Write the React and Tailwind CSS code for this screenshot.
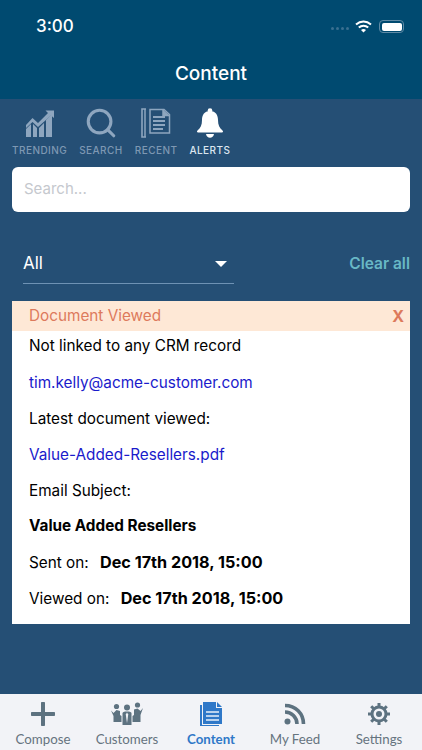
import React from 'react'
import { Search } from 'lucide-react'

const font = { fontFamily: 'Inter' }

function TrendingIcon() {
  return (
    <svg width="30" height="30" viewBox="0 0 30 30" fill="#8ea6bf">
      <path d="M1 29V21L6 16V29Z" />
      <path d="M8 29V16L12 20V29Z" />
      <path d="M14 29V20L19 15V29Z" />
      <path d="M21 29V12L27 6V29Z" />
      <path d="M1 17L7.5 10L13 15L23 5L20.5 2.5H29V10L26 7.5L13 19L7.5 14L1 20Z" />
    </svg>
  )
}

function RecentIcon() {
  return (
    <svg width="30" height="30" viewBox="0 0 30 30" fill="none" stroke="#8ea6bf" strokeWidth="1.5">
      <path d="M5 1H1V29H5" strokeWidth="1.6" />
      <path d="M4 1V29" />
      <path d="M9 1.5H23L28.5 6.5V25H9Z" />
      <path d="M22 1.5V7.5H28.5" fill="#8ea6bf" />
      <path d="M12 9H24M12 13H24M12 17H24M12 21H22" strokeWidth="2" />
    </svg>
  )
}

function BellIcon() {
  return (
    <svg width="28" height="30" viewBox="0 0 28 30" fill="white">
      <circle cx="14" cy="2.5" r="2.3" />
      <path d="M14 3C8 3 6 7.5 6 12C6 17 4.5 20 1.5 22.5C0.5 23.3 1 24.5 2 24.5H26C27 24.5 27.5 23.3 26.5 22.5C23.5 20 22 17 22 12C22 7.5 20 3 14 3Z" />
      <path d="M10 26H18C17.5 28.5 16 29.7 14 29.7S10.5 28.5 10 26Z" />
    </svg>
  )
}

function CustomersIcon() {
  return (
    <svg width="32" height="24" viewBox="0 0 32 24" fill="#5d7280">
      <circle cx="5.5" cy="4.5" r="2.6" />
      <circle cx="16" cy="5.5" r="3" />
      <circle cx="26.5" cy="3" r="2.6" />
      <path d="M0 8.5L2.5 11L5.5 8L9 9V13L10.5 14V20H2.5V14Z" />
      <path d="M11.5 23V11.5C11.5 10 13 9.5 16 9.5S20.5 10 20.5 11.5V23Z" />
      <path d="M32 6L29.5 9L26.5 6.5L23 7.5V13L21.5 14V20H29.5V13Z" />
      <path d="M16 10.5L14.8 12.5L15.5 18L16 21L16.5 18L17.2 12.5Z" fill="#f2f3f7" />
    </svg>
  )
}

function ContentIcon() {
  return (
    <svg width="24" height="24" viewBox="0 0 24 24" fill="#2f78c8">
      <path d="M4 0H17V6H23V22H4Z" />
      <path d="M1 3H3V23H20V24H1Z" />
      <path d="M18 0L23 5H18Z" />
      <path d="M7 9H20V11H7ZM7 13H20V15H7ZM7 17H20V19H7Z" fill="#b9d2ee" />
    </svg>
  )
}

function PlusIcon() {
  return (
    <svg width="24" height="24" viewBox="0 0 24 24" fill="#5d7280">
      <path d="M10 1C10 0.4 10.4 0 11 0H13C13.6 0 14 0.4 14 1V10H23C23.6 10 24 10.4 24 11V13C24 13.6 23.6 14 23 14H14V23C14 23.6 13.6 24 13 24H11C10.4 24 10 23.6 10 23V14H1C0.4 14 0 13.6 0 13V11C0 10.4 0.4 10 1 10H10Z" />
    </svg>
  )
}

function FeedIcon() {
  return (
    <svg width="22" height="22" viewBox="0 0 22 22" fill="none" stroke="#5d7280" strokeWidth="3.6">
      <circle cx="3.5" cy="18.5" r="3" fill="#5d7280" stroke="none" />
      <path d="M1 9C7.5 9 13 14.5 13 21" />
      <path d="M1 2.5C11.5 2.5 19.5 10.5 19.5 21" />
    </svg>
  )
}

function GearIcon() {
  return (
    <svg width="24" height="24" viewBox="0 0 24 24">
      <circle cx="12" cy="12" r="7" fill="none" stroke="#5d7280" strokeWidth="3" />
      <circle cx="12" cy="12" r="3" fill="#5d7280" />
      <path d="M12 1V5M12 19V23M1 12H5M19 12H23M4.2 4.2L7 7M17 17L19.8 19.8M19.8 4.2L17 7M7 17L4.2 19.8" stroke="#5d7280" strokeWidth="3" />
    </svg>
  )
}

function TopTab({ icon, label, active }) {
  return (
    <div className="flex flex-col items-center shrink-0">
      <div className="h-[30px] flex items-center justify-center">{icon}</div>
      <span className={`mt-[5px] text-[10px] leading-[14px] tracking-[0.45px] font-medium ${active ? 'text-[#dce6f0]' : 'text-[#7e98b3]'}`}>{label}</span>
    </div>
  )
}

function BottomTab({ icon, label, active }) {
  return (
    <div className="flex-1 flex flex-col items-center">
      <div className="h-[26px] flex items-center justify-center">{icon}</div>
      <span className={`mt-[3px] text-[13.3px] leading-[18px] ${active ? 'text-[#2f78c8] font-bold' : 'text-[#66747f]'}`} style={{ fontFamily: 'Lato' }}>{label}</span>
    </div>
  )
}

export default function App() {
  return (
    <div className="w-[422px] h-[750px] flex flex-col overflow-hidden bg-[#254f75]" style={font}>
      <header className="bg-[#004a70] h-[99px] shrink-0 text-white">
        <div className="flex items-center justify-between h-[53px] pl-[36px] pr-[18px]">
          <span className="text-[17px] font-medium">3:00</span>
          <div className="flex items-center gap-[6px]">
            <div className="flex gap-[2px] mt-[3px]">
              <span className="w-[3px] h-[3px] rounded-full bg-[#3a7090]"></span>
              <span className="w-[3px] h-[3px] rounded-full bg-[#3a7090]"></span>
              <span className="w-[3px] h-[3px] rounded-full bg-[#3a7090]"></span>
              <span className="w-[3px] h-[3px] rounded-full bg-[#3a7090]"></span>
            </div>
            <svg width="17" height="13" viewBox="0 0 17 13" fill="none" stroke="white" strokeWidth="2">
              <path d="M1 4.5C5.5 0.5 11.5 0.5 16 4.5" />
              <path d="M3.8 7.5C6.5 5 10.5 5 13.2 7.5" />
              <path d="M8.5 12.5L6 10C7.5 8.8 9.5 8.8 11 10Z" fill="white" stroke="none" />
            </svg>
            <div className="w-[25px] h-[13px] rounded-[4px] border border-[#5f8aa5] p-[1.5px] ml-[1px]">
              <div className="w-full h-full bg-white rounded-[2px]"></div>
            </div>
          </div>
        </div>
        <h1 className="text-center text-[19px] leading-[24px] font-medium mt-[9px]">Content</h1>
      </header>

      <main className="flex-1 flex flex-col px-[12px]">
        <div className="flex gap-[12px] mt-[9px]">
          <TopTab icon={<TrendingIcon />} label="TRENDING" />
          <TopTab icon={<Search size={34} strokeWidth={2.2} color="#8ea6bf" />} label="SEARCH" />
          <TopTab icon={<RecentIcon />} label="RECENT" />
          <TopTab icon={<BellIcon />} label="ALERTS" active />
        </div>

        <div className="mt-[10px] h-[45px] bg-white rounded-[6px] flex items-center px-[12px] text-[15px] text-[#c5c8ce]">Search...</div>

        <div className="mt-[28px] flex items-start justify-between">
          <div className="w-[211px] ml-[11px] h-[44px] pt-[5px] border-b border-[#6e92b4] flex items-center justify-between text-white text-[17px] pr-[7px]">
            <span>All</span>
            <span className="w-0 h-0 border-x-[6px] border-x-transparent border-t-[6px] border-t-white"></span>
          </div>
          <span className="text-[15.5px] font-semibold text-[#68b8c6] mt-[12px]">Clear all</span>
        </div>

        <section className="mt-[17px] bg-white text-[15.3px] text-black pb-[11px]">
          <div className="h-[30px] bg-[#fee8d6] flex items-center justify-between pl-[17px] pr-[6px] text-[#dd7a5c]">
            <span>Document Viewed</span>
            <span className="font-bold text-[16px]">X</span>
          </div>
          <div className="flex flex-col px-[17px]">
            <p className="h-[30px] leading-[30px]">Not linked to any CRM record</p>
            <p className="h-[36px] leading-[44px] text-[#1a1acb]">tim.kelly@acme-customer.com</p>
            <p className="h-[36px] leading-[44px]">Latest document viewed:</p>
            <p className="h-[36px] leading-[44px] text-[#1a1acb]">Value-Added-Resellers.pdf</p>
            <p className="h-[36px] leading-[44px]">Email Subject:</p>
            <p className="h-[36px] leading-[42px] font-bold">Value Added Resellers</p>
            <p className="h-[36px] leading-[42px]">Sent on: <span className="font-bold text-[16.2px] ml-[7px]">Dec 17th 2018, 15:00</span></p>
            <p className="h-[36px] leading-[42px]">Viewed on: <span className="font-bold text-[16.2px] ml-[7px]">Dec 17th 2018, 15:00</span></p>
          </div>
        </section>
      </main>

      <nav className="h-[56px] shrink-0 bg-[#f2f3f7] flex px-[1px] pt-[7px]">
        <BottomTab icon={<PlusIcon />} label="Compose" />
        <BottomTab icon={<CustomersIcon />} label="Customers" />
        <BottomTab icon={<ContentIcon />} label="Content" active />
        <BottomTab icon={<FeedIcon />} label="My Feed" />
        <BottomTab icon={<GearIcon />} label="Settings" />
      </nav>
    </div>
  )
}
